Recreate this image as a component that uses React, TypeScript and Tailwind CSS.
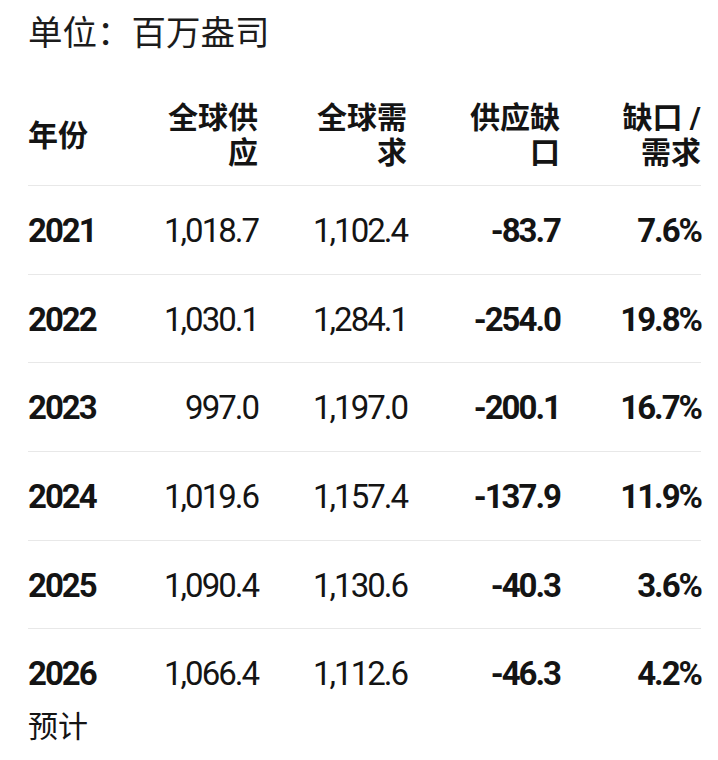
import React from "react";

const rows = [
  { year: "2021", note: "", supply: "1,018.7", demand: "1,102.4", gap: "-83.7", ratio: "7.6%" },
  { year: "2022", note: "", supply: "1,030.1", demand: "1,284.1", gap: "-254.0", ratio: "19.8%" },
  { year: "2023", note: "", supply: "997.0", demand: "1,197.0", gap: "-200.1", ratio: "16.7%" },
  { year: "2024", note: "", supply: "1,019.6", demand: "1,157.4", gap: "-137.9", ratio: "11.9%" },
  { year: "2025", note: "", supply: "1,090.4", demand: "1,130.6", gap: "-40.3", ratio: "3.6%" },
  { year: "2026", note: "预计", supply: "1,066.4", demand: "1,112.6", gap: "-46.3", ratio: "4.2%" },
];

const grid = "grid grid-cols-[107px_123px_149px_153px_141px]";

export default function App() {
  return (
    <div
      className="w-[718px] min-h-[760px] bg-white pl-[28px] pt-[11px] text-[#141414]"
      style={{ fontFamily: "Roboto, 'Noto Sans CJK SC', sans-serif" }}
    >
      <div className="text-[34.5px] leading-[44px] font-normal text-[#1c1c1c]">单位：百万盎司</div>

      <div className="w-[673px] mt-[45px]">
        <div className={`${grid} items-center pb-[15px] text-[30px] leading-[35px] font-bold`}>
          <div>年份</div>
          <div className="text-right">全球供<br />应</div>
          <div className="text-right">全球需<br />求</div>
          <div className="text-right">供应缺<br />口</div>
          <div className="text-right">缺口&nbsp;/<br />需求</div>
        </div>

        {rows.map((r) => (
          <div
            key={r.year}
            className={`${grid} items-start border-t border-[#e8e8e8] pt-[18px] ${r.note ? "" : "h-[88.7px]"} text-[33px] leading-[53px] tracking-[-2px]`}
          >
            <div>
              <div className="font-bold">{r.year}</div>
              {r.note && <div className="font-normal text-[30px] tracking-normal">{r.note}</div>}
            </div>
            <div className="text-right font-normal">{r.supply}</div>
            <div className="text-right font-normal">{r.demand}</div>
            <div className="text-right font-bold">{r.gap}</div>
            <div className="text-right font-bold">{r.ratio}</div>
          </div>
        ))}
      </div>
    </div>
  );
}
